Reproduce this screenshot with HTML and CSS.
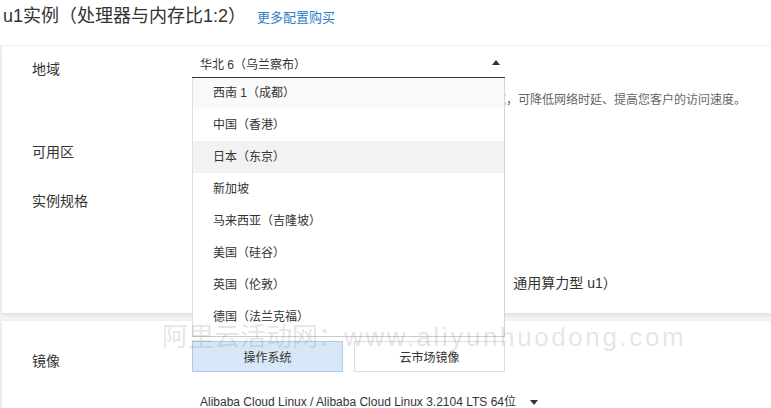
FILE: index.html
```html
<!DOCTYPE html>
<html>
<head>
    <meta charset="UTF-8">
    <title>u1实例</title>
    <link rel="stylesheet" href="styles.css">
</head>
<body>
    <div class="header">
        <h2 class="title">u1实例（处理器与内存比1:2）</h2>
        <a class="more-link" href="#">更多配置购买</a>
    </div>

    <div class="main">
        <div class="card card-top">
            <div class="row row-region">
                <div class="label">地域</div>
                <div class="field">
                    <div class="select">
                        <span>华北 6（乌兰察布）</span>
                        <span class="arrow-up"></span>
                        <div class="dropdown">
                            <ul class="options">
                                <li class="opt-soft">西南 1（成都）</li>
                                <li>中国（香港）</li>
                                <li class="opt-hover">日本（东京）</li>
                                <li>新加坡</li>
                                <li>马来西亚（吉隆坡）</li>
                                <li>美国（硅谷）</li>
                                <li>英国（伦敦）</li>
                                <li>德国（法兰克福）</li>
                                <li>美国（弗吉尼亚）</li>
                            </ul>
                        </div>
                    </div>
                    <p class="desc">不同地域的实例之间内网互不相通；选择靠近客户的地域，可降低网络时延、提高您客户的访问速度。</p>
                </div>
            </div>
            <div class="row row-zone">
                <div class="label">可用区</div>
                <div class="field"></div>
            </div>
            <div class="row row-spec">
                <div class="label">实例规格</div>
                <div class="field">
                    <p class="spec-line">当前选择实例ecs.u1-c1m2.xlarge（4 vCPU 8 GiB，通用算力型 u1）</p>
                </div>
            </div>
        </div>

        <div class="card card-bottom">
            <div class="row row-image">
                <div class="label">镜像</div>
                <div class="field">
                    <div class="tabs">
                        <button class="tab tab-active">操作系统</button>
                        <button class="tab">云市场镜像</button>
                    </div>
                    <div class="os-select">
                        <span>Alibaba Cloud Linux / Alibaba Cloud Linux 3.2104 LTS 64位</span>
                        <span class="arrow-down"></span>
                    </div>
                </div>
            </div>
        </div>
    </div>

    <div class="watermark"><span class="wm-cn">阿里云活动网：</span><span class="wm-en">www.aliyunhuodong.com</span></div>
</body>
</html>
```

FILE: styles.css
```css
body {
    margin: 0;
    height: 408px;
    font-family: "Liberation Sans", "Noto Sans CJK SC", sans-serif;
    color: #333;
    background-color: #fff;
    overflow: hidden;
}
.header {
    height: 45px;
    display: flex;
    align-items: baseline;
    padding: 4px 0 0 3px;
    box-sizing: border-box;
    background-color: #fff;
}
.title {
    margin: 0;
    font-size: 18px;
    font-weight: normal;
    line-height: 24px;
    color: #333;
}
.more-link {
    margin-left: 11px;
    font-size: 13px;
    color: #2f7dc8;
    text-decoration: none;
}
.main {
    background-color: #f2f2f2;
    padding: 1px 0 0 2px;
    height: 363px;
    box-sizing: border-box;
}
.card {
    background-color: #fff;
    box-shadow: 0 2px 4px rgba(0,0,0,0.08);
}
.card-top {
    height: 267px;
    padding-top: 4px;
    box-sizing: border-box;
}
.card-bottom {
    margin-top: 8px;
    padding-top: 20px;
    height: 87px;
    box-sizing: border-box;
}
.row {
    display: flex;
}
.label {
    width: 190px;
    padding-left: 30px;
    box-sizing: border-box;
    font-size: 14px;
    line-height: 20px;
    flex-shrink: 0;
}
.field {
    flex: 1;
}
.row-region .label {
    margin-top: 9px;
}
.select {
    position: relative;
    width: 313px;
    height: 28px;
    border-bottom: 1px solid #333;
    display: flex;
    align-items: center;
    justify-content: space-between;
    padding: 0 5px 0 8px;
    box-sizing: border-box;
    font-size: 12px;
}
.arrow-up {
    width: 0;
    height: 0;
    border-left: 4px solid transparent;
    border-right: 4px solid transparent;
    border-bottom: 5px solid #333;
    margin-top: -2px;
}
.dropdown {
    position: absolute;
    top: 28px;
    left: 0;
    width: 313px;
    height: 259px;
    box-sizing: border-box;
    background-color: #fff;
    border-left: 1px solid #dedede;
    border-right: 1px solid #d6d6d6;
    border-bottom: 1px solid #ccc;
    overflow: hidden;
    z-index: 10;
}
.options {
    list-style: none;
    margin: -1px 0 0 0;
    padding: 0;
}
.options li {
    height: 32px;
    line-height: 32px;
    padding-left: 20px;
    font-size: 12px;
    color: #333;
}
.options .opt-soft {
    background-color: #f9f9f9;
}
.options .opt-hover {
    background-color: #f2f2f2;
}
.desc {
    margin: 12px 0 0 0;
    padding-left: 14px;
    font-size: 12px;
    line-height: 20px;
    color: #666;
    white-space: nowrap;
}
.row-zone {
    margin-top: 32px;
}
.row-spec {
    margin-top: 29px;
}
.spec-line {
    margin: 82px 0 0 0;
    font-size: 14px;
    line-height: 20px;
    white-space: nowrap;
}
.row-image .label {
    margin-top: 10px;
}
.tabs {
    display: flex;
    gap: 11px;
}
.tab {
    width: 151px;
    height: 31px;
    box-sizing: border-box;
    border: 1px solid #ddd;
    background-color: #fff;
    font-family: "Liberation Sans", "Noto Sans CJK SC", sans-serif;
    font-size: 12px;
    color: #333;
    padding: 0;
}
.tab-active {
    background-color: #d8e7f7;
    border-color: #aac9ec;
}
.os-select {
    margin-top: 24px;
    padding-left: 8px;
    font-size: 12px;
    line-height: 12px;
    display: flex;
    align-items: center;
}
.arrow-down {
    width: 0;
    height: 0;
    border-left: 4px solid transparent;
    border-right: 4px solid transparent;
    border-top: 5px solid #333;
    margin-left: 14px;
}
.watermark {
    position: absolute;
    left: 162px;
    top: 320px;
    font-size: 26px;
    line-height: 34px;
    color: rgba(120,120,120,0.2);
    white-space: nowrap;
    z-index: 20;
    pointer-events: none;
}
.wm-en {
    letter-spacing: 2.6px;
}
```
